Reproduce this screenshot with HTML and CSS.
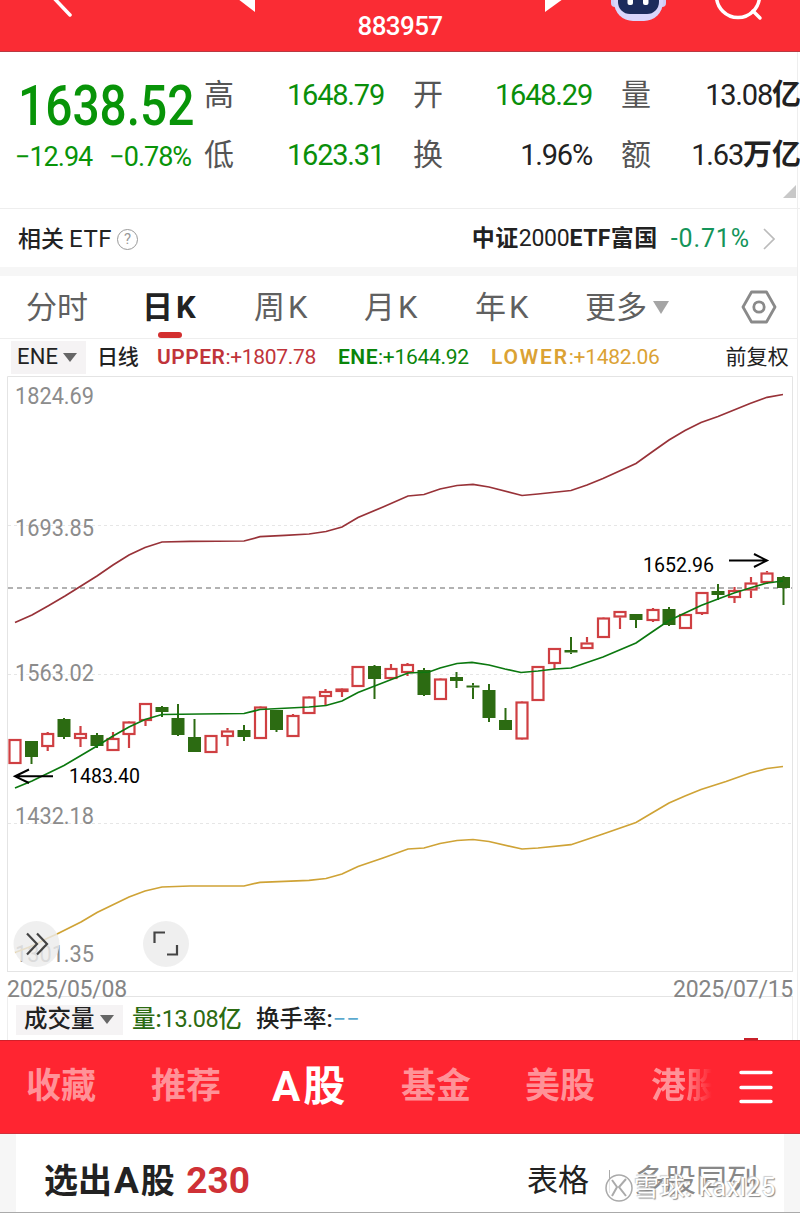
FILE: index.html
```
<!DOCTYPE html>
<html lang="zh-CN">
<head>
    <meta charset="UTF-8">
    <meta name="viewport" content="width=device-width, initial-scale=1.0">
    <title>883957</title>
    <link rel="stylesheet" href="styles.css">
</head>
<body>

<header class="header">
    <svg class="header-icons" width="800" height="52" viewBox="0 0 800 52">
        <path d="M51 -5 L70 15" stroke="#fff" stroke-width="3.5" stroke-linecap="round" fill="none"/>
        <path d="M238 -1 L255 -1 L255 12 Z" fill="#fff"/>
        <path d="M545 -4 L545 12 L563 -1 Z" fill="#fff"/>
        <rect x="611" y="-10" width="8" height="17" rx="4" fill="#cfcdf6"/>
        <rect x="658" y="-10" width="8" height="17" rx="4" fill="#cfcdf6"/>
        <rect x="614" y="-25" width="49" height="46" rx="19" fill="#d9d5fb"/>
        <rect x="618" y="-18" width="41" height="32" rx="12" fill="#1c2b5c"/>
        <rect x="627.500" y="-6" width="5.500" height="11" rx="2" fill="#fff"/>
        <rect x="643" y="-6" width="5.500" height="11" rx="2" fill="#fff"/>
        <circle cx="738" cy="-4" r="21.500" stroke="#fff" stroke-width="3.500" fill="none"/>
        <path d="M753 11 L760 18" stroke="#fff" stroke-width="3.500" stroke-linecap="round"/>
    </svg>
    <h1>883957</h1>
</header>

<main class="page">
    <section class="quote">
        <div class="price">
            <p class="last"><span>1638.52</span></p>
            <p class="change"><span>−12.94</span><span>−0.78%</span></p>
        </div>
        <dl class="stats">
            <div><dt>高</dt><dd class="green">1648.79</dd></div>
            <div><dt>开</dt><dd class="green">1648.29</dd></div>
            <div><dt>量</dt><dd>13.08<b>亿</b></dd></div>
            <div><dt>低</dt><dd class="green">1623.31</dd></div>
            <div><dt>换</dt><dd>1.96%</dd></div>
            <div><dt>额</dt><dd>1.63<b>万亿</b></dd></div>
        </dl>
        <i class="corner"></i>
    </section>

    <section class="etf">
        <span class="etf-title">相关<em>ETF</em></span>
        <span class="help">?</span>
        <span class="etf-name">中证<em>2000</em>ETF富国</span>
        <span class="etf-change">-0.71%</span>
        <svg width="12" height="22" viewBox="0 0 12 22"><path d="M1 1 L11 11 L1 21" fill="none" stroke="#bbb" stroke-width="1.700"/></svg>
    </section>

    <nav class="tabs">
        <span class="tab">分时</span>
        <span class="tab active">日<em>K</em></span>
        <span class="tab">周<em>K</em></span>
        <span class="tab">月<em>K</em></span>
        <span class="tab">年<em>K</em></span>
        <span class="tab more">更多<i></i></span>
        <svg width="36" height="34" viewBox="0 0 36 34" fill="none" stroke="#8a8a8a" stroke-width="2.800" stroke-linejoin="round">
            <path d="M10.500 2 H25.500 L34 17 L25.500 32 H10.500 L2 17 Z"/>
            <circle cx="18" cy="17" r="5.200"/>
        </svg>
    </nav>

    <section class="indicator">
        <span class="picker">ENE<i></i></span>
        <span class="period">日线</span>
        <span class="upper"><b>UPPER</b>:+1807.78</span>
        <span class="ene"><b>ENE</b>:+1644.92</span>
        <span class="lower"><b>LOWER</b>:+1482.06</span>
        <span class="adjust">前复权</span>
    </section>

    <section class="chart">
        <svg id="kline" width="800" height="596" viewBox="0 376 800 596">
            <path class="frame" d="M7.500 972 V376.500 H792.500 V972 M7.500 971.500 H792.500"/>
            <path class="grid" d="M8 525.500 H792 M8 674.500 H792 M8 823.500 H792"/>
            <path class="now" d="M8 588 H792"/>
            <g class="axis">
                <text x="15" y="404" textLength="79" lengthAdjust="spacingAndGlyphs">1824.69</text>
                <text x="15" y="536" textLength="79" lengthAdjust="spacingAndGlyphs">1693.85</text>
                <text x="15" y="681" textLength="79" lengthAdjust="spacingAndGlyphs">1563.02</text>
                <text x="15" y="824" textLength="79" lengthAdjust="spacingAndGlyphs">1432.18</text>
                <text x="15" y="962" textLength="79" lengthAdjust="spacingAndGlyphs">1301.35</text>
            </g>
            <g id="candles"></g>
            <polyline class="line-upper" points="15,622.5 32,615 48,606 65,596 81,586 97,576 113,565 129,555 145,547.5 162,542 190,541.3 244,541 260,536.7 285,535.3 309,534 326,531.5 342,527 358,517.5 383,507 408,496 424,494.5 440,489 457,485.5 473,484.3 489,487 522,495.5 538,494 571,490.5 587,485 603,478.5 636,463.5 652,452 669,440 685,430.5 701,422.5 718,416.5 750,403.5 767,397.3 783,394.5"/>
            <polyline class="line-ene" points="15,788 32,781 64,765.5 97,746 113,736 129,727 145,719.5 162,714.5 200,714 244,713.5 260,709.5 309,707 326,705.5 342,701 358,692.5 408,673 429,672 440,668 457,663.5 472,662.3 489,665 505,669 521,672.5 538,671 555,669 571,668 603,657 636,643 652,632 669,620.5 685,613 701,605.5 718,599 734,593 750,588 767,583 783,581"/>
            <polyline class="line-lower" points="15,952.5 32,946 48,938 57,934 81,922 97,912.5 129,897 145,891 162,887 190,886 244,886 260,882.3 309,880.3 326,878.5 342,874 358,866.5 383,858 408,849 424,848 440,843.5 457,840.5 473,839.5 489,841.5 522,849 538,848 571,844.7 603,834 636,822.5 652,813 669,803 685,796 701,789.5 726,781.5 750,773 767,768.5 783,766.5"/>
            <g class="mark">
                <path d="M53 776.300 H15 M29 769.500 L15 776.300 L29 783"/>
                <text x="69" y="783" textLength="71" lengthAdjust="spacingAndGlyphs">1483.40</text>
                <path d="M729 560.500 H767 M754 554 L767 560.500 L754 567"/>
                <text x="643" y="572" textLength="71" lengthAdjust="spacingAndGlyphs">1652.96</text>
            </g>
            <circle class="round" cx="36.500" cy="944" r="23"/>
            <circle class="round" cx="166" cy="944" r="23"/>
            <path class="glyph" d="M27 933.500 L37 944 L27 954.500 M37 933.500 L47 944 L37 954.500"/>
            <path class="glyph" d="M154.500 943 V932.500 H165 M177 945 V954.500 H167"/>
        </svg>
    </section>

    <div class="dates"><span>2025/05/08</span><span>2025/07/15</span></div>

    <section class="volume">
        <span class="picker">成交量<i></i></span>
        <span class="vol"><b>量:</b>13.08<b>亿</b></span>
        <span class="turnover"><b>换手率:</b><em>−−</em></span>
        <i class="vol-bar"></i>
    </section>
</main>

<nav class="market">
    <span>收藏</span>
    <span>推荐</span>
    <span class="active">A股</span>
    <span>基金</span>
    <span>美股</span>
    <span class="faded">港股</span>
    <svg width="34" height="34" viewBox="0 0 34 34" stroke="#fff" stroke-width="3.400" stroke-linecap="round"><path d="M2 2.500 H32 M2 17.500 H32 M2 31.500 H32"/></svg>
</nav>

<section class="result">
    <div class="result-card">
        <h2>选出<span>A</span>股 <em>230</em></h2>
        <span class="view">表格</span>
        <i></i>
        <span class="view off">多股同列</span>
    </div>
    <div class="watermark">
        <svg width="30" height="30" viewBox="0 0 30 30" fill="none">
            <circle cx="15" cy="15" r="13" fill="#fff" fill-opacity=".7" stroke="#aaa" stroke-width="1.500"/>
            <path d="M8 7 L13 14 L8 23 M22 6 L15 14 L22 23" stroke="#aaa" stroke-width="2"/>
        </svg>
        <span>雪球: kaxl25</span>
    </div>
</section>

<script>
    // x center, body top, body bottom, high, low, up
    const candles = [
        [15, 739, 764, 739, 764, 1], [31.5, 741, 757, 741, 764, 0], [47.7, 733, 747, 732, 751, 1],
        [64, 719, 737, 718, 739, 0], [80.5, 733, 739, 726, 747, 1], [97, 735, 746, 733, 748, 0],
        [113, 738, 751, 732, 751, 1], [129, 721.5, 735, 721, 748, 1], [145.5, 703, 721, 703, 726, 1],
        [162, 707, 712, 706, 717, 0], [178, 718, 735, 704, 736, 0], [194.5, 737, 752, 719, 752, 0],
        [211, 735, 753, 735, 753, 1], [227.5, 730.5, 737, 728, 746, 1], [244, 730, 737, 725, 741, 0],
        [260.5, 706.5, 739, 706, 739, 1], [276.5, 710, 730, 710, 732, 0], [293, 715, 737, 714, 737, 1],
        [309, 696.5, 714, 696, 714, 1], [325.5, 691, 697, 689, 705, 1], [342, 688.5, 692, 688, 697, 1],
        [358, 666, 687, 666, 687, 1], [374.5, 666, 679, 665, 699, 0], [391, 668, 679, 664, 679, 1],
        [407.5, 664, 673, 663, 676, 1], [424, 670, 695, 668, 696, 0], [440.5, 678.5, 700, 678, 700, 1],
        [456.5, 677, 681, 672, 688, 0], [473, 685.5, 687.5, 683, 699, 0], [489, 690, 718, 684, 722, 0],
        [505.5, 720, 730, 708, 730, 0], [522, 701.5, 739.5, 701, 740, 1], [538, 666, 701, 666, 701, 1],
        [554.5, 648, 664, 648, 669, 1], [571, 650, 652.5, 637, 654, 0], [587, 642.5, 649, 637, 649, 1],
        [603.5, 617.5, 638, 617, 638, 1], [620, 611, 617.5, 611, 629, 1], [636, 614, 620, 614, 628, 0],
        [653, 609, 621, 608, 622, 1], [669, 609, 625, 607, 626, 0], [685.5, 614, 629, 614, 629, 1],
        [702, 592, 614, 592, 615, 1], [718, 591, 595, 584, 600, 0], [734.5, 590, 598, 587, 603, 1],
        [751, 582.5, 590.5, 577, 598, 1], [767, 572.5, 583, 571, 584, 1], [783.5, 577, 588, 576, 605, 0]
    ];

    document.getElementById('candles').innerHTML = candles.map(([x, top, bottom, high, low, up]) => {
        const inset = up ? 1 : 0;
        return `<g class="${up ? 'up' : 'down'}">
            <path d="M${x} ${high} V${top} M${x} ${bottom} V${low}"/>
            <rect x="${x - 6.5 + inset}" y="${top + inset}" width="${13 - inset * 2}" height="${bottom - top - inset * 2}"/>
        </g>`;
    }).join('');
</script>

</body>
</html>
```

FILE: styles.css
```
* {
    margin: 0;
    padding: 0;
    box-sizing: border-box;
}
body {
    width: 800px;
    height: 1213px;
    overflow: hidden;
    font-family: Roboto, "Noto Sans CJK SC", sans-serif;
    line-height: 1.2;
    color: #222;
    background-color: #fff;
}
em, i {
    font-style: normal;
}
.green {
    color: #0a8f0a;
}
.header {
    position: relative;
    height: 52px;
    background-color: #fa2c34;
    border-bottom: 1px solid #b93a42;
    color: #fff;
    text-align: center;
}
.header-icons {
    position: absolute;
    left: 0;
    top: 0;
}
.header h1 {
    font-size: 26px;
    font-weight: 500;
    line-height: 52px;
    letter-spacing: -0.6px;
}
.page {
    height: 988px;
    border-right: 1px solid #eee;
    margin-right: 2px;
    overflow: visible;
}

/* quote */
.quote {
    position: relative;
    display: flex;
    width: 800px;
    height: 157px;
    border-bottom: 1px solid #eee;
}
.price {
    width: 204px;
    padding-top: 22px;
    color: #089408;
}
.last {
    height: 64px;
    line-height: 64px;
    padding-left: 18px;
    font-size: 55px;
    font-weight: 500;
}
.last span {
    display: inline-block;
    transform: scaleX(0.87);
    transform-origin: left;
}
.change {
    display: flex;
    gap: 17px;
    padding-left: 15px;
    font-size: 27px;
    line-height: 38px;
    letter-spacing: -1px;
    white-space: nowrap;
}
.stats {
    display: grid;
    grid-template-columns: 180px 179px 180px;
    grid-template-rows: 60px 60px;
    column-gap: 29px;
    width: 596px;
    padding-top: 13px;
}
.stats div {
    display: flex;
    justify-content: space-between;
    align-items: center;
    white-space: nowrap;
}
.stats dt {
    color: #555;
    font-size: 30px;
}
.stats dd {
    font-size: 29px;
    letter-spacing: -1.2px;
}
.stats b {
    font-weight: 700;
    letter-spacing: 0;
}
.corner {
    position: absolute;
    right: 4px;
    bottom: 10px;
    border-left: 13px solid transparent;
    border-bottom: 13px solid #c8c8c8;
}

/* etf */
.etf {
    display: flex;
    align-items: center;
    height: 67px;
    padding: 2px 22px 0 18px;
    border-bottom: 9px solid #f6f6f6;
    font-size: 23px;
    white-space: nowrap;
}
.etf-title {
    font-weight: 500;
}
.etf-title em {
    margin-left: 5px;
    font-size: 24px;
    font-weight: 400;
    letter-spacing: 0.5px;
}
.help {
    width: 21px;
    height: 21px;
    margin-left: 5px;
    border: 1px solid #999;
    border-radius: 50%;
    color: #999;
    font-size: 15px;
    line-height: 19px;
    text-align: center;
}
.etf-name {
    margin-left: auto;
    font-weight: 700;
    letter-spacing: 0.4px;
}
.etf-name em {
    font-weight: 400;
    letter-spacing: -0.2px;
}
.etf-change {
    margin: 0 13px;
    color: #14945a;
    font-size: 25px;
    letter-spacing: 0.9px;
}

/* period tabs */
.tabs {
    display: grid;
    grid-template-columns: 118px 110px 110px 111px 110px 156px 36px;
    align-items: center;
    height: 63px;
    padding-left: 26px;
    border-bottom: 1px solid #eee;
    color: #606060;
    font-size: 31px;
    white-space: nowrap;
}
.tab {
    position: relative;
    height: 62px;
    line-height: 64px;
}
.tab em {
    margin-left: 3px;
}
.tab.active {
    left: -2px;
    color: #222;
    font-weight: 700;
}
.tab.active::after {
    content: "";
    position: absolute;
    left: 16px;
    bottom: 0;
    width: 24px;
    height: 6px;
    border-radius: 3px;
    background-color: #d32f2f;
}
.more i {
    display: inline-block;
    margin-left: 6px;
    vertical-align: 4px;
    border: 8.5px solid transparent;
    border-top: 13px solid #a5a5a5;
    border-bottom: 0;
}

/* indicator row */
.indicator {
    display: flex;
    align-items: center;
    height: 37px;
    padding-left: 11px;
    font-size: 21px;
    letter-spacing: -0.3px;
    white-space: nowrap;
}
.indicator b {
    font-weight: 600;
    letter-spacing: 0.5px;
}
.indicator .lower b {
    letter-spacing: 1.8px;
}
.picker {
    display: flex;
    align-items: center;
    gap: 5px;
    width: 75px;
    height: 33px;
    padding-left: 6px;
    background-color: #f5f3f4;
    font-size: 22px;
}
.indicator .picker {
    letter-spacing: 0.2px;
}
.picker i {
    border: 7px solid transparent;
    border-top: 9px solid #666;
    border-bottom: 0;
}
.period {
    width: 71px;
    padding-left: 11px;
    font-weight: 500;
}
.upper {
    width: 181px;
    color: #c0343a;
}
.ene {
    width: 153px;
    color: #0a850a;
}
.lower {
    color: #dba234;
}
.adjust {
    margin-left: auto;
    margin-right: 8px;
    letter-spacing: 0.2px;
}

/* chart */
.chart {
    height: 596px;
}
.chart svg {
    display: block;
}
.chart path, .chart polyline {
    fill: none;
}
.frame {
    stroke: #e4e4e4;
}
.grid {
    stroke: #e6e6e6;
    stroke-dasharray: 3 3;
}
.now {
    stroke: #999;
    stroke-width: 1.3;
    stroke-dasharray: 5 4;
}
.axis text {
    fill: #8c8c8c;
    font-size: 24px;
}
.line-upper {
    stroke: #983238;
    stroke-width: 1.7;
}
.line-ene {
    stroke: #0b780f;
    stroke-width: 1.7;
}
.line-lower {
    stroke: #cfa336;
    stroke-width: 1.7;
}
.up rect {
    fill: #fff;
    stroke: #cf3f42;
    stroke-width: 2.2;
}
.up path {
    stroke: #cf3f42;
    stroke-width: 2.2;
}
.down rect {
    fill: #2c6b12;
}
.down path {
    stroke: #2c6b12;
    stroke-width: 2;
}
.mark path {
    stroke: #000;
    stroke-width: 2;
}
.mark text {
    fill: #000;
    font-size: 20px;
}
.round {
    fill: #ebebeb;
    fill-opacity: 0.82;
}
.chart .glyph {
    stroke: #444;
    stroke-width: 2.2;
}
.dates {
    display: flex;
    justify-content: space-between;
    height: 25px;
    margin-left: 7px;
    margin-right: 4px;
    border-bottom: 1px solid #e4e4e4;
    color: #858585;
    font-size: 23px;
    letter-spacing: -0.25px;
    line-height: 35px;
}
.volume {
    position: relative;
    display: flex;
    align-items: center;
    height: 43px;
    margin-left: 7px;
    margin-right: 4px;
    padding: 2px 0 0 8px;
    border-left: 1px solid #eee;
    border-right: 1px solid #eee;
    font-size: 23.5px;
    white-space: nowrap;
}
.volume b {
    font-weight: 500;
    letter-spacing: 0;
}
.volume .picker {
    width: 107px;
    height: 30px;
    padding-left: 8px;
    font-size: 23.5px;
    font-weight: 500;
}
.vol {
    width: 124px;
    margin-left: 9px;
    color: #2c6b12;
    letter-spacing: -0.5px;
}
.turnover em {
    color: #5ca9cf;
}
.vol-bar {
    position: absolute;
    right: 34px;
    bottom: 0;
    width: 14px;
    height: 2px;
    background-color: #c8202a;
}

/* market nav */
.market {
    display: grid;
    grid-template-columns: 125px 121px 129px 124px 126px 88px 34px;
    align-items: center;
    height: 94px;
    padding-left: 26px;
    border-top: 1px solid #d2202a;
    border-bottom: 1px solid #d2303a;
    background-color: #ff2531;
    color: #ff9298;
    font-size: 35px;
    font-weight: 700;
    line-height: 88px;
    white-space: nowrap;
}
.market .active {
    color: #fff;
    font-size: 42px;
    letter-spacing: 3px;
}
.market .faded {
    width: 62px;
    overflow: hidden;
    background: linear-gradient(90deg, #ff9298 50%, #ff2531 98%);
    background-clip: text;
    -webkit-background-clip: text;
    color: transparent;
}

/* result */
.result {
    position: relative;
    height: 79px;
    padding: 0 16px;
    background-color: #f6f6f6;
    border-bottom: 1px solid #aaa;
}
.result-card {
    display: flex;
    align-items: center;
    height: 78px;
    padding: 16px 0 0 28px;
    background-color: #fff;
    white-space: nowrap;
}
.result h2 {
    width: 483px;
    font-size: 34px;
    font-weight: 700;
    line-height: 62px;
}
.result h2 span {
    padding: 0 2px;
    font-size: 37px;
}
.result h2 em {
    margin-left: 3px;
    color: #cf3136;
    font-size: 37px;
}
.view {
    color: #222;
    font-size: 31px;
}
.result-card i {
    width: 1px;
    height: 23px;
    margin: 0 24px 0 20px;
    background-color: #aaa;
}
.view.off {
    color: #888;
}
.watermark {
    position: absolute;
    left: 604px;
    top: 38px;
    display: flex;
    align-items: center;
    color: #fff;
    font-size: 25px;
    letter-spacing: 0.7px;
    text-shadow: 1px 1px 1px #888, -1px -1px 1px #ccc;
    line-height: 32px;
    white-space: nowrap;
}
```
